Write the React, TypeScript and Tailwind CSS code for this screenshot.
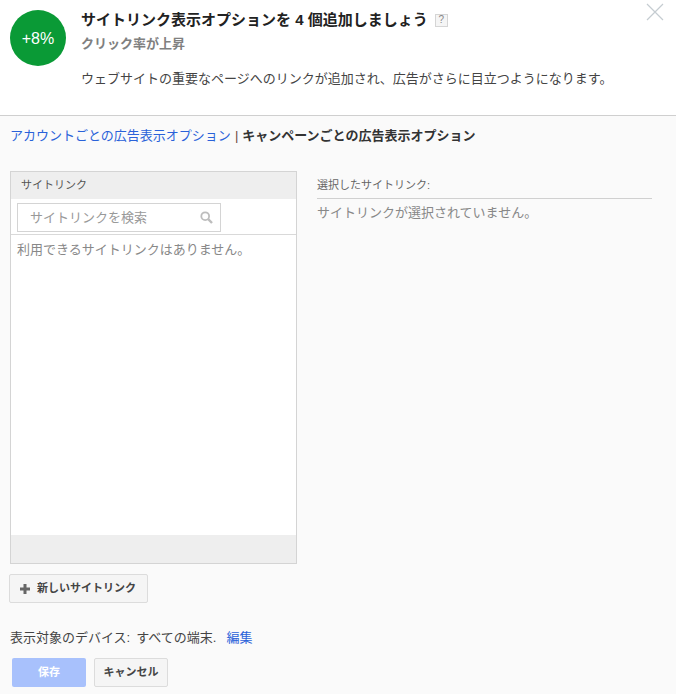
import React from "react";

const font = { fontFamily: '"Liberation Sans", "Noto Sans CJK JP", sans-serif' };

export default function App() {
  return (
    <div style={font} className="relative flex h-[694px] w-[676px] flex-col overflow-hidden bg-[#fafafa] text-[13px] text-[#333]">
      <header className="flex h-[116px] shrink-0 gap-[15px] border-b border-[#cfcfcf] bg-white pl-[10px] pt-[10px]">
        <div className="flex h-[56px] w-[56px] shrink-0 items-center justify-center rounded-full bg-[#0a9a36] pt-[1px] text-[16px] text-white">
          +8%
        </div>
        <div className="flex flex-col">
          <div className="flex h-[20px] items-center">
            <h1 className="text-[15px] leading-[20px] font-bold text-[#222]">サイトリンク表示オプションを 4 個追加しましょう</h1>
            <span className="ml-[7px] flex h-[13px] w-[13px] items-center justify-center border border-[#d5d5d5] bg-[#f5f5f5] text-[10px] leading-none text-[#888]">?</span>
          </div>
          <p className="mt-[5px] text-[13px] leading-[18px] font-bold text-[#808080]">クリック率が上昇</p>
          <p className="mt-[17px] text-[13px] leading-[18px] text-[#444]">ウェブサイトの重要なページへのリンクが追加され、広告がさらに目立つようになります。</p>
        </div>
      </header>

      <button className="absolute right-[12px] top-[3px] text-[#c5ccd1]" aria-label="閉じる">
        <svg width="18" height="18" viewBox="0 0 18 18" fill="none" stroke="currentColor" strokeWidth="1.2">
          <path d="M1 1 L17 17 M17 1 L1 17" />
        </svg>
      </button>

      <nav className="flex h-[38px] shrink-0 items-center pl-[10px] pt-[1px] text-[13px] leading-[18px]">
        <a className="text-[#2a62d9]">アカウントごとの広告表示オプション</a>
        <span className="mx-[4px] text-[#6b4a3a]">|</span>
        <span className="font-bold text-[#333]">キャンペーンごとの広告表示オプション</span>
      </nav>

      <div className="mt-[17px] flex pl-[10px]">
        <section className="flex h-[393px] w-[287px] shrink-0 flex-col border border-[#d4d4d4] bg-white">
          <div className="flex h-[27px] shrink-0 items-center bg-[#eeeeee] pl-[10px] text-[11px] text-[#555]">サイトリンク</div>
          <div className="flex h-[36px] shrink-0 border-b border-[#d9d9d9] pl-[6px] pt-[4px]">
            <div className="flex h-[29px] w-[204px] items-center justify-between border border-[#d4d4d4] pl-[12px] pr-[7px] text-[13px] text-[#999]">
              <span>サイトリンクを検索</span>
              <svg width="13" height="13" viewBox="0 0 13 13" fill="none" stroke="#bdbdbd">
                <circle cx="5.2" cy="5.2" r="3.9" strokeWidth="1.8" />
                <path d="M8.2 8.2 L12 12" strokeWidth="2.4" />
              </svg>
            </div>
          </div>
          <p className="flex-1 pl-[6px] pt-[6px] text-[13px] leading-[18px] text-[#888]">利用できるサイトリンクはありません。</p>
          <div className="h-[28px] shrink-0 bg-[#eeeeee]" />
        </section>

        <section className="ml-[20px] w-[335px] pt-[4px]">
          <div className="flex h-[24px] items-center border-b border-[#d0d0d0] pb-[3px] text-[11px] text-[#666]">選択したサイトリンク:</div>
          <p className="pt-[5px] text-[13px] leading-[18px] text-[#888]">サイトリンクが選択されていません。</p>
        </section>
      </div>

      <div className="mt-[10px] pl-[9px]">
        <button className="flex h-[29px] w-[139px] items-center rounded-[2px] border border-[#dcdcdc] bg-[#f5f5f5] pl-[10px] text-[11px] font-bold text-[#444]">
          <svg width="10" height="10" viewBox="0 0 10 10" fill="#666" className="mr-[7px]">
            <path d="M3.5 0h3v3.5H10v3H6.5V10h-3V6.5H0v-3h3.5z" />
          </svg>
          新しいサイトリンク
        </button>
      </div>

      <div className="mt-[26px] flex h-[18px] items-center pl-[10px] text-[13px] text-[#444]">
        <span>表示対象のデバイス:</span>
        <span className="ml-[6px]">すべての端末.</span>
        <a className="ml-[10px] text-[#2a62d9]">編集</a>
      </div>

      <div className="mt-[11px] flex gap-[8px] pl-[12px]">
        <button className="flex h-[29px] w-[74px] items-center justify-center rounded-[2px] bg-[#a8c1fc] text-[11px] font-bold text-white">保存</button>
        <button className="flex h-[29px] w-[74px] items-center justify-center rounded-[2px] border border-[#dcdcdc] bg-[#f5f5f5] text-[11px] font-bold text-[#444]">キャンセル</button>
      </div>
    </div>
  );
}
